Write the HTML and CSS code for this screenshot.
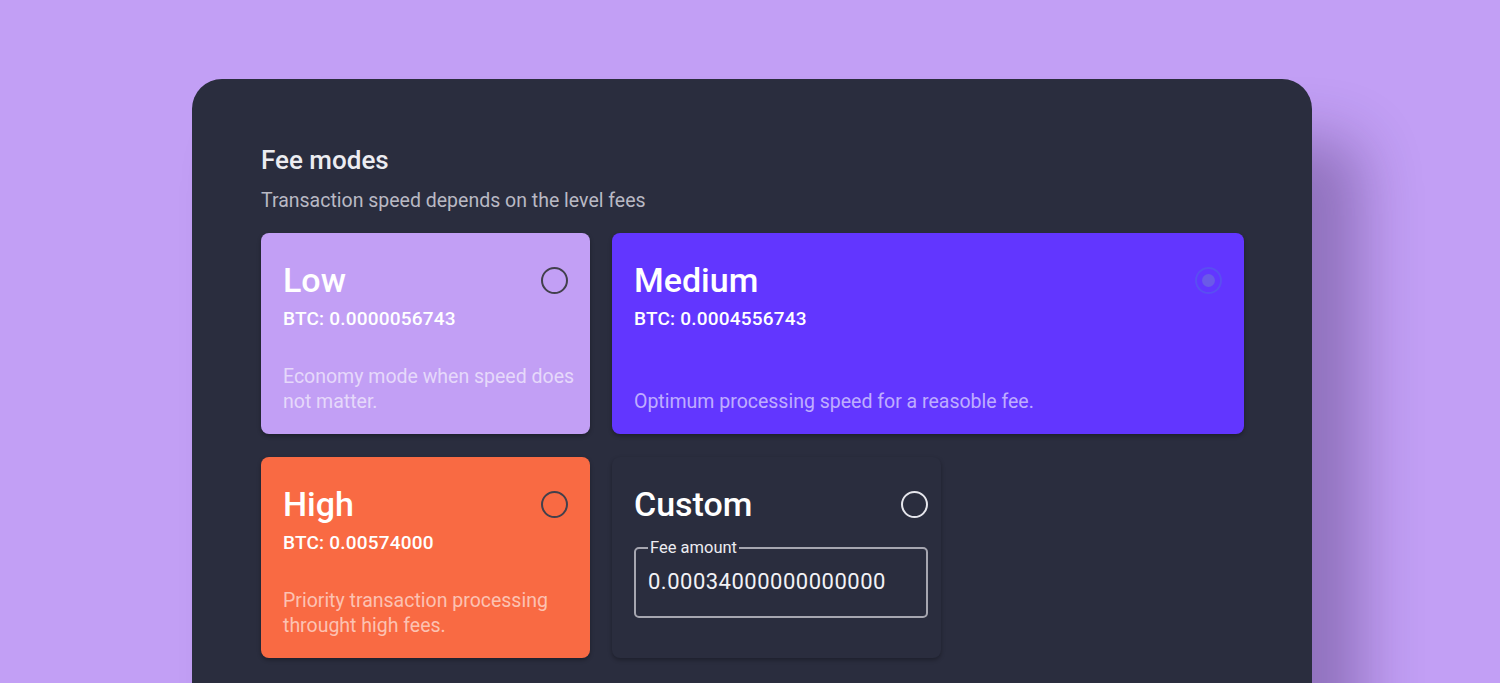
FILE: index.html
```html
<!DOCTYPE html>
<html lang="en">
<head>
    <meta charset="UTF-8">
    <meta name="viewport" content="width=device-width, initial-scale=1.0">
    <title>Fee modes</title>
    <link rel="stylesheet" href="styles.css">
</head>
<body>
    <div class="panel">
        <h1>Fee modes</h1>
        <p class="subtitle">Transaction speed depends on the level fees</p>
        <div class="fee-grid">
            <div class="fee-card low">
                <div class="card-head">
                    <h2>Low</h2>
                    <span class="radio"></span>
                </div>
                <div class="btc">BTC: 0.0000056743</div>
                <p class="desc">Economy mode when speed does not matter.</p>
            </div>
            <div class="fee-card medium">
                <div class="card-head">
                    <h2>Medium</h2>
                    <span class="radio checked"></span>
                </div>
                <div class="btc">BTC: 0.0004556743</div>
                <p class="desc">Optimum processing speed for a reasoble fee.</p>
            </div>
            <div class="fee-card high">
                <div class="card-head">
                    <h2>High</h2>
                    <span class="radio"></span>
                </div>
                <div class="btc">BTC: 0.00574000</div>
                <p class="desc">Priority transaction processing throught high fees.</p>
            </div>
            <div class="fee-card custom">
                <div class="card-head">
                    <h2>Custom</h2>
                    <span class="radio light"></span>
                </div>
                <fieldset class="fee-field">
                    <legend>Fee amount</legend>
                    <input type="text" id="fee-amount" value="0.00034000000000000">
                </fieldset>
            </div>
        </div>
    </div>
</body>
</html>
```

FILE: styles.css
```css
body {
    margin: 0;
    padding: 79px 0 0 192px;
    background: #c29ff5;
    font-family: Roboto, "Noto Sans", Arial, sans-serif;
    overflow: hidden;
    height: 683px;
    box-sizing: border-box;
}
.panel {
    width: 1120px;
    min-height: 700px;
    box-sizing: border-box;
    padding: 66px 68px 0 69px;
    background: #2a2d3e;
    border-radius: 30px;
    box-shadow: 50px 60px 60px rgba(40, 20, 70, 0.32);
}
h1 {
    margin: 0;
    font-size: 26px;
    line-height: 30px;
    font-weight: 500;
    color: #ececf1;
}
.subtitle {
    margin: 14px 0 20px;
    font-size: 19.5px;
    line-height: 24px;
    color: #b9b9c4;
}
.fee-grid {
    display: grid;
    grid-template-columns: 329px 1fr;
    grid-auto-rows: 201px;
    column-gap: 22px;
    row-gap: 23px;
}
.fee-card {
    display: flex;
    flex-direction: column;
    box-sizing: border-box;
    padding: 22px 22px 20px;
    border-radius: 8px;
    box-shadow: 0 2px 4px rgba(0, 0, 0, 0.3);
    color: #fff;
}
.low {
    background: #c29ff5;
}
.medium {
    background: #6236ff;
}
.high {
    background: #f96a43;
}
.custom {
    width: 329px;
    padding-right: 13px;
    background: #2a2d3e;
}
.card-head {
    display: flex;
    justify-content: space-between;
    align-items: center;
    margin-top: 5px;
}
h2 {
    margin: 0;
    font-size: 34px;
    line-height: 40px;
    font-weight: 500;
}
.radio {
    width: 27px;
    height: 27px;
    box-sizing: border-box;
    border: 2px solid #42404c;
    border-radius: 50%;
    display: flex;
    align-items: center;
    justify-content: center;
}
.radio.checked {
    border-color: #5a4ef2;
}
.radio.checked::after {
    content: "";
    width: 13px;
    height: 13px;
    border-radius: 50%;
    background: #6a5ae8;
}
.radio.light {
    border-color: #e6e6ec;
}
.btc {
    margin-top: 9px;
    font-size: 19px;
    line-height: 20px;
    font-weight: 500;
    letter-spacing: 0.2px;
}
.desc {
    margin: auto -12px 0 0;
    font-size: 19.5px;
    line-height: 25px;
    color: rgba(255, 255, 255, 0.6);
}
.fee-field {
    margin: 15px 0 0;
    padding: 11px 12px 22px;
    border: 2px solid #a6a6b0;
    border-radius: 5px;
    min-width: 0;
}
.fee-field legend {
    padding: 0 2px;
    font-size: 16.5px;
    line-height: 18px;
    color: #ececf1;
}
.fee-field input {
    display: block;
    width: 100%;
    height: 26px;
    padding: 0;
    border: 0;
    outline: none;
    background: transparent;
    font-family: Roboto, "Noto Sans", Arial, sans-serif;
    font-size: 22px;
    letter-spacing: 0.5px;
    color: #f2f2f6;
}
```
